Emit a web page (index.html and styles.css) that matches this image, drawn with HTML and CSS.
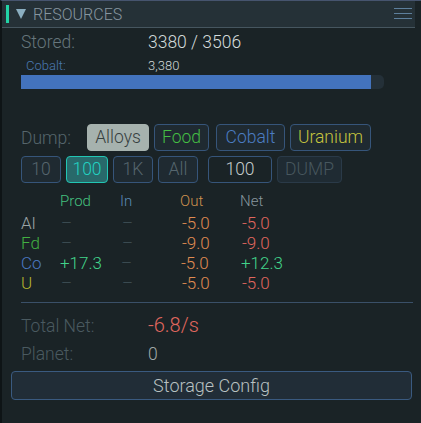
FILE: index.html
```html
<!DOCTYPE html>
<html>
<head>
<meta charset="utf-8">
<link rel="stylesheet" href="styles.css">
</head>
<body>
<div class="panel">
  <div class="header">
    <div class="accent"></div>
    <div class="tri"></div>
    <div class="title">RESOURCES</div>
    <svg class="menu" width="18" height="12" viewBox="0 0 18 12">
      <rect x="0" y="0" width="18" height="1" fill="#5d7f9c"/>
      <rect x="0" y="5" width="18" height="1" fill="#5d7f9c"/>
      <rect x="0" y="10" width="18" height="1" fill="#5d7f9c"/>
    </svg>
  </div>
  <div class="content">
    <div class="stored">
      <span class="lbl">Stored:</span>
      <span class="val">3380 / 3506</span>
    </div>
    <div class="sub">
      <span class="sublbl">Cobalt:</span>
      <span class="subval">3,380</span>
    </div>
    <div class="track"><div class="fill" style="width:350px"></div></div>

    <div class="btnrow dumprow">
      <span class="dumplbl">Dump:</span>
      <span class="btn active-grey w-alloys">Alloys</span>
      <span class="btn c-food w-food">Food</span>
      <span class="btn c-cobalt w-cobalt">Cobalt</span>
      <span class="btn c-uranium w-uranium">Uranium</span>
    </div>
    <div class="btnrow amtrow">
      <span class="btn c-dim w-40">10</span>
      <span class="btn active-teal w-42">100</span>
      <span class="btn c-dim w-40">1K</span>
      <span class="btn c-dim w-40">All</span>
      <span class="btn input w-64">100</span>
      <span class="btn disabled w-65">DUMP</span>
    </div>

    <div class="table">
      <div class="trow thead">
        <span class="c0"></span>
        <span class="c1 h-prod">Prod</span>
        <span class="c1 h-in">In</span>
        <span class="c1 h-out">Out</span>
        <span class="c1 h-net">Net</span>
      </div>
      <div class="trow">
        <span class="c0 l-al">Al</span>
        <span class="c1 dash">–</span>
        <span class="c1 dash">–</span>
        <span class="c1 neg-o">-5.0</span>
        <span class="c1 neg-r">-5.0</span>
      </div>
      <div class="trow">
        <span class="c0 l-fd">Fd</span>
        <span class="c1 dash">–</span>
        <span class="c1 dash">–</span>
        <span class="c1 neg-o">-9.0</span>
        <span class="c1 neg-r">-9.0</span>
      </div>
      <div class="trow">
        <span class="c0 l-co">Co</span>
        <span class="c1 pos">+17.3</span>
        <span class="c1 dash">–</span>
        <span class="c1 neg-o">-5.0</span>
        <span class="c1 pos">+12.3</span>
      </div>
      <div class="trow">
        <span class="c0 l-u">U</span>
        <span class="c1 dash">–</span>
        <span class="c1 dash">–</span>
        <span class="c1 neg-o">-5.0</span>
        <span class="c1 neg-r">-5.0</span>
      </div>
    </div>
    <div class="sep"></div>
    <div class="sumrow total">
      <span class="lbl2">Total Net:</span>
      <span class="totval">-6.8/s</span>
    </div>
    <div class="sumrow planet">
      <span class="lbl2">Planet:</span>
      <span class="planval">0</span>
    </div>
  </div>
  <div class="config">Storage Config</div>
</div>
</body>
</html>
```
FILE: styles.css
```css
html, body {
  margin: 0;
  padding: 0;
  background: #1a2326;
}
body {
  font-family: Roboto, "Open Sans", sans-serif;
  font-weight: 300;
  width: 421px;
  height: 423px;
  overflow: hidden;
}
.panel {
  width: 421px;
  height: 423px;
  box-sizing: border-box;
  border-left: 2px solid #0e1416;
  border-top: 1px solid #46546e;
  display: flex;
  flex-direction: column;
}
.header {
  height: 26px;
  margin-right: 6px;
  background: #253137;
  border-bottom: 1px solid #46565f;
  display: flex;
  align-items: center;
}
.accent {
  width: 3px;
  height: 18px;
  margin-left: 4px;
  background: #22d3a6;
}
.tri {
  width: 0;
  height: 0;
  margin-left: 7px;
  border-left: 5px solid transparent;
  border-right: 5px solid transparent;
  border-top: 10px solid #8aaec0;
}
.title {
  margin-left: 7px;
  font-size: 16px;
  color: #8796a0;
}
.menu {
  margin-left: auto;
  margin-right: 3px;
}
.content {
  padding-left: 19px;
  display: flex;
  flex-direction: column;
}
.stored {
  margin-top: 2px;
  height: 24px;
  line-height: 24px;
  font-size: 17.5px;
  display: flex;
}
.lbl {
  width: 127px;
  color: #66767c;
}
.val {
  color: #d3dbdb;
}
.sub {
  margin-top: 4px;
  height: 16px;
  line-height: 16px;
  font-size: 13px;
  display: flex;
}
.sublbl {
  margin-left: 5px;
  width: 122px;
  color: #4a78b0;
}
.subval {
  color: #cdd5d5;
}
.track {
  margin-top: 1px;
  width: 363px;
  height: 14px;
  background: #243038;
  border-radius: 0 5px 5px 0;
}
.fill {
  height: 14px;
  background: #4373bd;
}
.btnrow {
  display: flex;
  align-items: center;
  gap: 5px;
}
.dumprow {
  margin-top: 35px;
  height: 27px;
}
.amtrow {
  margin-top: 5px;
  height: 27px;
}
.dumplbl {
  font-size: 17.5px;
  color: #56666c;
  width: 59px;
  margin-right: 2px;
}
.btn {
  box-sizing: border-box;
  height: 27px;
  border: 1px solid #36557a;
  border-radius: 4px;
  background: #1f2a31;
  font-size: 17.5px;
  line-height: 25px;
  text-align: center;
  white-space: nowrap;
}
.w-alloys { width: 62px; }
.w-food { width: 55px; }
.w-cobalt { width: 69px; margin-left: 2px; }
.w-uranium { width: 81px; }
.w-40 { width: 40px; }
.w-42 { width: 42px; }
.w-64 { width: 64px; margin-left: 5px; }
.w-65 { width: 65px; }
.active-grey {
  background: #a6b2ae;
  border-color: #a6b2ae;
  color: #36403f;
}
.c-food { color: #44be44; }
.c-cobalt { color: #4b7cc2; }
.c-uranium { color: #c6c53e; }
.c-dim { color: #56666e; }
.active-teal {
  background: #28696a;
  border-color: #22c6b4;
  color: #22d2c2;
}
.input {
  background: #1a2326;
  color: #c3cbcb;
}
.disabled {
  background: #1f2b33;
  border-color: #2a3a48;
  color: #47575e;
}
.table {
  margin-top: 8px;
  display: flex;
  flex-direction: column;
}
.trow {
  display: flex;
  height: 20px;
  line-height: 20px;
  font-size: 17px;
}
.thead {
  font-size: 15px;
  margin-bottom: 2px;
}
.c0 {
  width: 39px;
  font-size: 17px;
}
.c1 {
  width: 60px;
}
.h-prod { color: #44c07e; }
.h-in { color: #5a8ab4; }
.h-out { color: #d0934f; }
.h-net { color: #88979e; }
.l-al { color: #9aa5a7; }
.l-fd { color: #42b042; }
.l-co { color: #4a78c0; }
.l-u { color: #b6b62e; }
.dash { color: #3a4a50; padding-left: 1px; }
.neg-o { color: #e08c52; }
.neg-r { color: #e0675e; }
.pos { color: #42d48a; }
.sep {
  margin-top: 9px;
  width: 392px;
  height: 1px;
  background: #3a5068;
}
.sumrow {
  display: flex;
  align-items: baseline;
  height: 29px;
  line-height: 29px;
}
.total { margin-top: 8px; }
.lbl2 {
  width: 127px;
  font-size: 17.5px;
  color: #4a5a60;
}
.totval {
  font-size: 20px;
  color: #e0675e;
}
.planval {
  font-size: 17.5px;
  color: #a0a9a9;
}
.config {
  margin: 2px 0 0 9px;
  width: 401px;
  height: 29px;
  box-sizing: border-box;
  border: 1px solid #3a5a80;
  border-radius: 4px;
  background: #212d37;
  color: #b9c1c1;
  font-size: 18px;
  line-height: 27px;
  text-align: center;
}
```
